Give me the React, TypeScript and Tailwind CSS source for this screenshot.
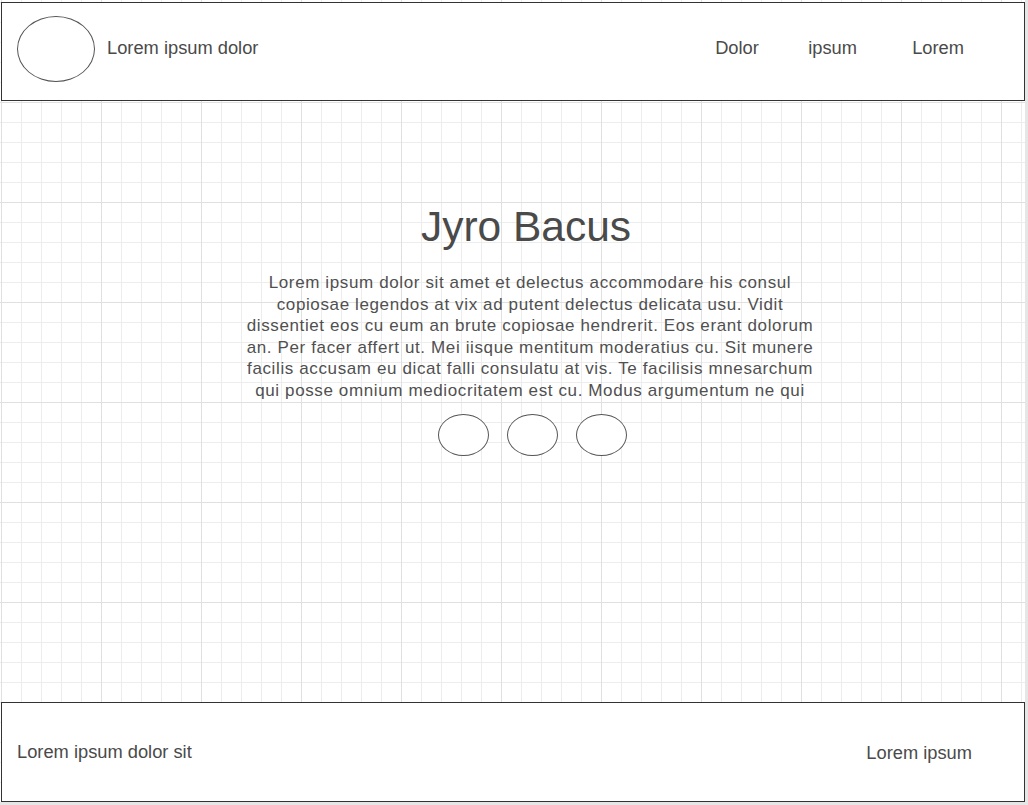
const navItems = [
  { label: "Dolor", className: "w-[93px]" },
  { label: "ipsum", className: "w-[104px]" },
  { label: "Lorem", className: "" },
];

const bioLines = [
  "Lorem ipsum dolor sit amet et delectus accommodare his consul",
  "copiosae legendos at vix ad putent delectus delicata usu. Vidit",
  "dissentiet eos cu eum an brute copiosae hendrerit. Eos erant dolorum",
  "an. Per facer affert ut. Mei iisque mentitum moderatius cu. Sit munere",
  "facilis accusam eu dicat falli consulatu at vis. Te facilisis mnesarchum",
  "qui posse omnium mediocritatem est cu. Modus argumentum ne qui",
];

const App = () => {
  return (
    <div className="w-full h-screen bg-[#e6e6e6] font-['Liberation_Sans',Arial,sans-serif] text-[#4a4a4a]">
      {/* canvas with the grid */}
      <div className="w-[1025px] h-[802px] flex flex-col pt-[2px] pl-[1px] bg-white bg-[linear-gradient(to_right,#e0e0e0_1px,transparent_1px),linear-gradient(to_bottom,#e0e0e0_1px,transparent_1px),linear-gradient(to_right,#ededed_1px,transparent_1px),linear-gradient(to_bottom,#ededed_1px,transparent_1px)] bg-[size:100px_100px,100px_100px,20px_20px,20px_20px] bg-[position:1px_2px]">
        {/* header */}
        <header className="h-[99px] w-[1024px] shrink-0 flex items-center pb-[7px] border border-[#333] bg-white">
          <div className="ml-[15px] mt-[1px] w-[78px] h-[66px] rounded-[50%] border border-[#555]" />
          <span className="ml-[12px] text-[18.3px]">Lorem ipsum dolor</span>
          <nav className="ml-auto flex pr-[60px] text-[18.3px]">
            {navItems.map((item) => (
              <span key={item.label} className={item.className}>
                {item.label}
              </span>
            ))}
          </nav>
        </header>

        {/* main */}
        <main className="flex-1 flex flex-col items-center pl-[26px]">
          <h1 className="mt-[103px] text-[42.5px] leading-[46px]">Jyro Bacus</h1>
          <p className="mt-[22px] ml-[8px] text-[17px] tracking-[0.62px] leading-[21.5px] text-center text-[#505050]">
            {bioLines.map((line, i) => (
              <span key={i} className="block">
                {line}
              </span>
            ))}
          </p>
          <div className="mt-[13px] ml-[13px] flex gap-[18px]">
            {[0, 1, 2].map((i) => (
              <div key={i} className="w-[51px] h-[42px] rounded-[50%] border border-[#555] bg-white" />
            ))}
          </div>
        </main>

        {/* footer */}
        <footer className="h-[100px] w-[1024px] shrink-0 flex items-center justify-between pl-[15px] pr-[52px] border border-[#333] bg-white text-[18.3px]">
          <span>Lorem ipsum dolor sit</span>
          <span className="pt-[2px]">Lorem ipsum</span>
        </footer>
      </div>
    </div>
  );
};

export default App;
